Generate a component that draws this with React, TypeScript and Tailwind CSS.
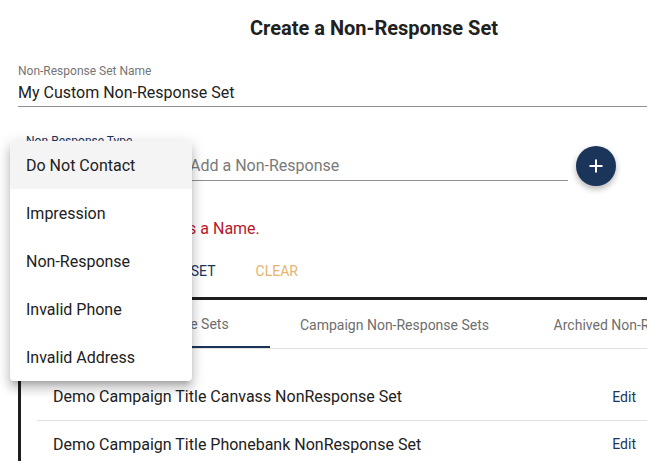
import React from 'react'

const menuItems = ['Do Not Contact', 'Impression', 'Non-Response', 'Invalid Phone', 'Invalid Address']

const sets = [
  'Demo Campaign Title Canvass NonResponse Set',
  'Demo Campaign Title Phonebank NonResponse Set',
]

function App() {
  return (
    <div className="relative w-[647px] h-[461px] overflow-hidden bg-white text-[#212121] font-['Roboto',sans-serif]">
      <div className="w-[748px] px-[18px]">
        <h1 className="pt-[16px] text-center text-[20px] leading-[24px] font-bold">Create a Non-Response Set</h1>

        {/* set name */}
        <div className="mt-[24px] border-b border-[#8f8f8f] pb-[4px]">
          <div className="text-[12px] leading-[14px] text-[#757575]">Non-Response Set Name</div>
          <div className="mt-[5px] text-[16px] leading-[19px]">My Custom Non-Response Set</div>
        </div>

        {/* type + add row */}
        <div className="mt-[27px] flex items-start">
          <div className="w-[156px] pl-[8px]">
            <div className="text-[12px] leading-[14px] text-[#1b3459]">Non-Response Type</div>
          </div>
          <div className="ml-[16px] w-[378px] pt-[22px] pb-[5px] border-b border-[#8f8f8f]">
            <div className="text-[16px] leading-[19px] text-[#7a7a7a]">Add a Non-Response</div>
          </div>
          <button className="ml-[8px] mt-[12px] w-[40px] h-[40px] rounded-full bg-[#1b3459] flex items-center justify-center shadow-[0_3px_6px_rgba(0,0,0,0.3)]">
            <svg width="16" height="16" viewBox="0 0 16 16">
              <path d="M8 1.5v13M1.5 8h13" stroke="white" strokeWidth="2" fill="none" />
            </svg>
          </button>
        </div>

        <div className="mt-[33px] text-[16px] leading-[19px] text-[#b8172b]">Non-Response Set needs a Name.</div>

        <div className="mt-[15px] flex items-center gap-[24px] pl-[21px]">
          <button className="h-[36px] px-[8px] text-[14px] font-normal text-[#1b3459]">SAVE NON-RESPONSE SET</button>
          <button className="h-[36px] px-[8px] text-[14px] font-normal text-[#e8b26f]">CLEAR</button>
        </div>

        {/* sets panel */}
        <div className="mt-[8px] border-[3px] border-[#1e1e1e] h-[200px] overflow-hidden">
          <div className="flex border-b border-[#e0e0e0]">
            <div className="w-[249px] shrink-0 h-[48px] pt-[2px] pr-[8px] flex items-center justify-center text-[14px] text-[#6e6e6e] border-b-2 border-[#1b3459]">Custom Non-Response Sets</div>
            <div className="w-[249px] shrink-0 h-[48px] pt-[2px] flex items-center justify-center text-[14px] text-[#6e6e6e]">Campaign Non-Response Sets</div>
            <div className="w-[249px] shrink-0 h-[48px] pt-[2px] flex items-center justify-center text-[14px] text-[#6e6e6e]">Archived Non-Response Sets</div>
          </div>
          <div className="ml-[16px] w-[615px] pt-[25px]">
            {sets.map((s, i) => (
              <div key={s} className={'h-[47px] flex items-center justify-between pl-[16px] pr-[16px] ' + (i === 0 ? 'border-b border-[#e0e0e0]' : '')}>
                <span className="text-[16px]">{s}</span>
                <span className="text-[14px] text-[#1b3459]">Edit</span>
              </div>
            ))}
          </div>
        </div>
      </div>

      {/* open select menu */}
      <div className="absolute left-[10px] top-[141px] w-[182px] rounded-[4px] bg-white shadow-[0_5px_5px_-3px_rgba(0,0,0,0.2),0_8px_10px_1px_rgba(0,0,0,0.14),0_3px_14px_2px_rgba(0,0,0,0.12)] overflow-hidden">
        {menuItems.map((m, i) => (
          <div key={m} className={'h-[48px] pt-[2px] flex items-center pl-[16px] text-[16px] text-[#212121] ' + (i === 0 ? 'bg-[#f4f4f4]' : '')}>
            {m}
          </div>
        ))}
      </div>
    </div>
  )
}

export default App
